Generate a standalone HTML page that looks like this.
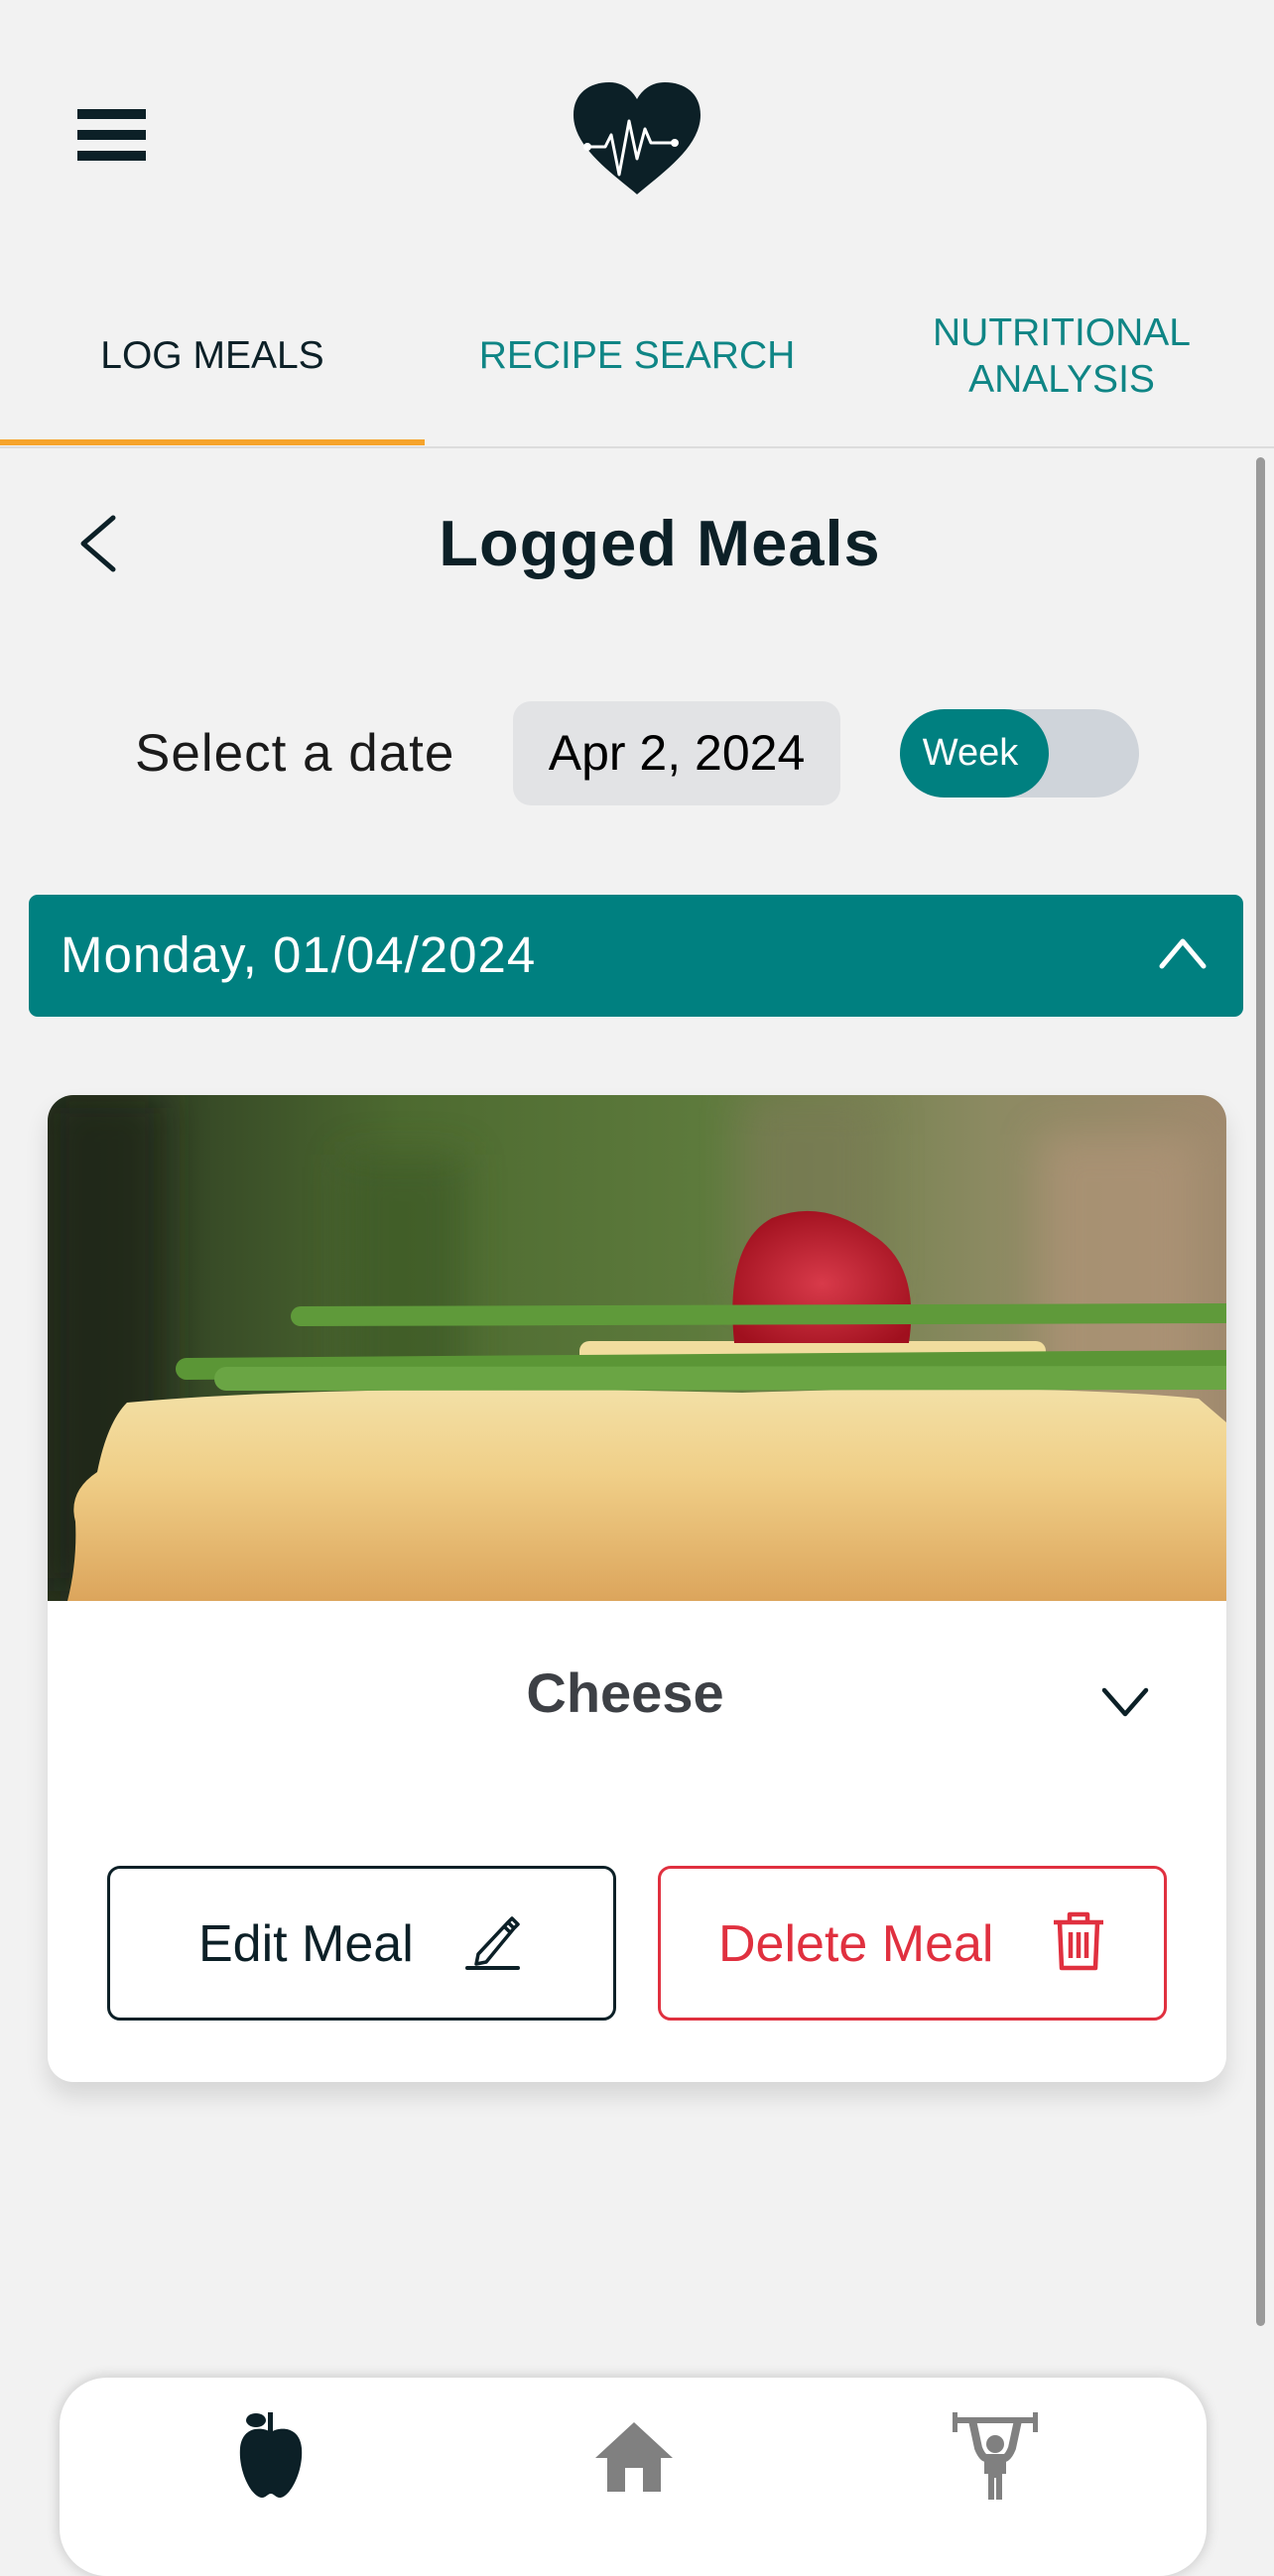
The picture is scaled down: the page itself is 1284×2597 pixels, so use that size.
<!DOCTYPE html>
<html><head><meta charset="utf-8">
<style>
*{margin:0;padding:0;box-sizing:border-box}
html,body{width:1284px;height:2535px;overflow:hidden;background:#f2f2f2;font-family:"Liberation Sans",sans-serif}
.a{position:absolute}
</style></head><body>
<div class="a" style="left:78px;top:110px;width:69px;height:10px;background:#0c2027"></div>
<div class="a" style="left:78px;top:131px;width:69px;height:10px;background:#0c2027"></div>
<div class="a" style="left:78px;top:152px;width:69px;height:10px;background:#0c2027"></div>
<svg class="a" style="left:576px;top:82px" width="132" height="114" viewBox="0 0 132 114">
<path d="M66 114 C40 92 2 66 2 34 C2 12 18 1 38 1 C52 1 61 9 66 18 C71 9 80 1 94 1 C114 1 130 12 130 34 C130 66 92 92 66 114Z" fill="#0c2027"/>
<polyline points="16,66 34,66 40,54 48,94 58,40 66,78 74,48 80,62 104,62" fill="none" stroke="#fff" stroke-width="3" stroke-linejoin="round"/>
<circle cx="16" cy="66" r="4" fill="#fff"/><circle cx="104" cy="62" r="4" fill="#fff"/>
</svg>
<div class="a" style="left:0;top:336px;width:428px;text-align:center;font-size:39px;line-height:46px;color:#0c2027">LOG MEALS</div>
<div class="a" style="left:428px;top:336px;width:428px;text-align:center;font-size:39px;line-height:46px;color:#0f8585">RECIPE SEARCH</div>
<div class="a" style="left:856px;top:312px;width:428px;text-align:center;font-size:39px;line-height:47px;color:#0f8585">NUTRITIONAL<br>ANALYSIS</div>
<div class="a" style="left:0;top:450px;width:1284px;height:2px;background:#dcdcdc"></div>
<div class="a" style="left:0;top:443px;width:428px;height:6px;background:#f6a42c"></div>
<div class="a" style="left:1266px;top:461px;width:9px;height:1884px;border-radius:5px;background:#9a9a9a"></div>
<svg class="a" style="left:74px;top:516px" width="48" height="64"><polyline points="40,6 10,32 40,58" fill="none" stroke="#0c2027" stroke-width="5" stroke-linecap="round" stroke-linejoin="round"/></svg>
<div class="a" style="left:340px;top:510px;width:650px;text-align:center;font-size:65px;font-weight:bold;line-height:76px;color:#0c2027;letter-spacing:1px">Logged Meals</div>
<div class="a" style="left:136px;top:730px;font-size:53px;line-height:60px;color:#1b1b1b;letter-spacing:1px">Select a date</div>
<div class="a" style="left:517px;top:707px;width:330px;height:105px;border-radius:18px;background:#e2e3e5;text-align:center;font-size:50px;line-height:105px;color:#000">Apr 2, 2024</div>
<div class="a" style="left:907px;top:715px;width:241px;height:89px;border-radius:45px;background:#cfd4da"></div>
<div class="a" style="left:907px;top:715px;width:150px;height:89px;border-radius:45px;background:#008080;color:#fff;font-size:38px;line-height:89px;text-align:center;padding-right:8px">Week</div>
<div class="a" style="left:29px;top:902px;width:1224px;height:123px;border-radius:9px;background:#008080"></div>
<div class="a" style="left:61px;top:933px;font-size:51px;line-height:60px;color:#fff;letter-spacing:1px">Monday, 01/04/2024</div>
<svg class="a" style="left:1166px;top:940px" width="52" height="40"><polyline points="5,34 26,9 47,34" fill="none" stroke="#fff" stroke-width="5" stroke-linecap="round" stroke-linejoin="round"/></svg>
<div class="a" style="left:48px;top:1104px;width:1188px;height:995px;border-radius:26px;background:#fff;box-shadow:0 14px 24px rgba(0,0,0,.12);overflow:hidden">
<svg width="1188" height="510" viewBox="0 0 1188 510" style="display:block">
<defs>
<linearGradient id="bg" x1="0" x2="1" y1="0" y2="0"><stop offset="0" stop-color="#26311f"/><stop offset=".3" stop-color="#4d6a30"/><stop offset=".55" stop-color="#5d7a3c"/><stop offset=".8" stop-color="#8c8a62"/><stop offset="1" stop-color="#a08a6e"/></linearGradient>
<linearGradient id="ch" x1="0" x2="0" y1="0" y2="1"><stop offset="0" stop-color="#f3e0a6"/><stop offset=".4" stop-color="#f0cf88"/><stop offset="1" stop-color="#dca55c"/></linearGradient>
<radialGradient id="pm" cx=".5" cy=".55" r=".6"><stop offset="0" stop-color="#d83a4a"/><stop offset="1" stop-color="#a0101e"/></radialGradient>
<filter id="bl"><feGaussianBlur stdDeviation="20"/></filter>
</defs>
<rect width="1188" height="510" fill="url(#bg)"/>
<g filter="url(#bl)" opacity=".7"><rect x="0" y="0" width="120" height="500" fill="#1a2217"/><rect x="300" y="60" width="120" height="300" fill="#3e5a25"/><rect x="700" y="0" width="140" height="200" fill="#7a7a55"/><rect x="1000" y="40" width="160" height="400" fill="#b09478"/></g>
<path d="M80 310 Q300 290 700 300 Q1000 290 1160 306 L1188 330 L1188 510 L20 510 Q30 470 28 430 Q20 400 50 380 Q60 330 80 310Z" fill="url(#ch)"/>
<rect x="536" y="248" width="470" height="24" rx="10" fill="#f1dd9e"/>
<path d="M692 250 Q682 150 730 124 Q780 104 830 140 Q880 170 868 250 Z" fill="url(#pm)"/>
<path d="M255 223 L1188 220" stroke="#5f9a3a" stroke-width="20" stroke-linecap="round"/>
<path d="M140 276 L1188 268" stroke="#5b9636" stroke-width="22" stroke-linecap="round"/>
<path d="M180 286 L1188 285" stroke="#6aa544" stroke-width="24" stroke-linecap="round"/>
</svg>
<div class="a" style="left:0;top:568px;width:1164px;text-align:center;font-size:56px;font-weight:bold;line-height:70px;color:#3d4045">Cheese</div>
<svg class="a" style="left:1060px;top:592px" width="52" height="40"><polyline points="5,8 26,32 47,8" fill="none" stroke="#0c2027" stroke-width="4.5" stroke-linecap="round" stroke-linejoin="round"/></svg>
<div class="a" style="left:60px;top:777px;width:513px;height:156px;border:3.5px solid #0c2027;border-radius:13px"></div>
<div class="a" style="left:152px;top:826px;font-size:52px;line-height:60px;color:#0c2027">Edit Meal</div>
<svg class="a" style="left:420px;top:822px" width="60" height="62"><path d="M14 44 L12 54 L22 52 L50 18 L44 12 Z M40 16 L46 22 M44 12 L48 8 L54 14 L50 18" fill="none" stroke="#0c2027" stroke-width="3.5" stroke-linejoin="round"/><path d="M3 58 L54 58" stroke="#0c2027" stroke-width="4" stroke-linecap="round"/></svg>
<div class="a" style="left:615px;top:777px;width:513px;height:156px;border:3.5px solid #e0303f;border-radius:13px"></div>
<div class="a" style="left:676px;top:826px;font-size:52px;line-height:60px;color:#e0303f">Delete Meal</div>
<svg class="a" style="left:1010px;top:822px" width="58" height="66"><path d="M4 12 H54 M20 12 V4 H38 V12 M10 12 L12 58 H46 L48 12 M21 22 V48 M29 22 V48 M37 22 V48" fill="none" stroke="#e0303f" stroke-width="4.5" stroke-linejoin="round"/></svg>
</div>
<div class="a" style="left:60px;top:2397px;width:1156px;height:200px;border-radius:48px;background:#fff;box-shadow:0 0 14px rgba(0,0,0,.2)"></div>
<svg class="a" style="left:236px;top:2430px" width="74" height="92" viewBox="0 0 74 92"><path d="M37 22 C28 16 8 16 6 38 C4 62 18 88 28 88 C32 88 34 84 37 84 C40 84 42 88 46 88 C56 88 70 62 68 38 C66 16 46 16 37 22Z" fill="#0c2027"/><rect x="34" y="2" width="5" height="22" fill="#0c2027"/><ellipse cx="22" cy="10" rx="10" ry="7" fill="#0c2027"/></svg>
<svg class="a" style="left:598px;top:2440px" width="82" height="74" viewBox="0 0 82 74"><path d="M41 2 L80 38 H68 V72 H50 V48 H32 V72 H14 V38 H2 Z" fill="#808080"/></svg>
<svg class="a" style="left:960px;top:2428px" width="86" height="92" viewBox="0 0 86 92"><path d="M2 4 V24 M84 4 V24" stroke="#808080" stroke-width="6"/><path d="M2 12 H84" stroke="#808080" stroke-width="6"/><circle cx="43" cy="36" r="9" fill="#808080"/><path d="M20 12 L26 40 Q30 50 34 50 H52 Q56 50 60 40 L66 12" fill="none" stroke="#808080" stroke-width="8"/><path d="M32 48 H54 V66 H50 V92 H44 V70 H42 V92 H36 V66 H32Z" fill="#808080"/></svg>
</body></html>
